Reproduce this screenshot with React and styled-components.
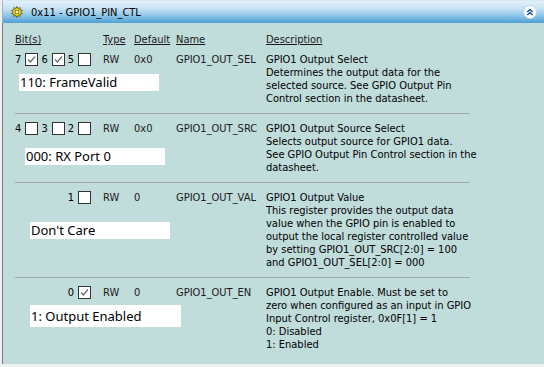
import styled, { createGlobalStyle } from "styled-components";

const GlobalStyle = createGlobalStyle`
  html, body {
    margin: 0;
    padding: 0;
    background: #f0f0f0;
  }
  body {
    font-family: "DejaVu Sans Condensed", "Liberation Sans", sans-serif;
    font-size: 11px;
    color: #000;
  }
`;

const fields = [
  {
    bits: [
      [7, true],
      [6, true],
      [5, false],
    ],
    type: "RW",
    def: "0x0",
    name: "GPIO1_OUT_SEL",
    desc: [
      "GPIO1 Output Select",
      "Determines the output data for the",
      "selected source. See GPIO Output Pin",
      "Control section in the datasheet.",
    ],
    value: "110: FrameValid",
    boxLeft: 4,
    boxTop: 8,
    boxWidth: 140,
    boxHeight: 17,
  },
  {
    bits: [
      [4, false],
      [3, false],
      [2, false],
    ],
    type: "RW",
    def: "0x0",
    name: "GPIO1_OUT_SRC",
    desc: [
      "GPIO1 Output Source Select",
      "Selects output source for GPIO1 data.",
      "See GPIO Output Pin Control section in the",
      "datasheet.",
    ],
    value: "000: RX Port 0",
    boxLeft: 10,
    boxTop: 13,
    boxWidth: 140,
    boxHeight: 17,
  },
  {
    bits: [[1, false]],
    type: "RW",
    def: "0",
    name: "GPIO1_OUT_VAL",
    desc: [
      "GPIO1 Output Value",
      "This register provides the output data",
      "value when the GPIO pin is enabled to",
      "output the local register controlled value",
      "by setting GPIO1_OUT_SRC[2:0] = 100",
      "and GPIO1_OUT_SEL[2:0] = 000",
    ],
    value: "Don't Care",
    boxLeft: 15,
    boxTop: 18,
    boxWidth: 140,
    boxHeight: 17,
  },
  {
    bits: [[0, true]],
    type: "RW",
    def: "0",
    name: "GPIO1_OUT_EN",
    desc: [
      "GPIO1 Output Enable. Must be set to",
      "zero when configured as an input in GPIO",
      "Input Control register, 0x0F[1] = 1",
      "0: Disabled",
      "1: Enabled",
    ],
    value: "1: Output Enabled",
    boxLeft: 15,
    boxTop: 6,
    boxWidth: 151,
    boxHeight: 22,
  },
];

function RegisterIcon() {
  return (
    <svg width="12" height="12" viewBox="0 0 12 12">
      <path
        d="M6 0.5 L7 2.5 L9.2 1.6 L9 3.8 L11.4 4.4 L9.8 6 L11.4 7.8 L9 8.2 L9.2 10.4 L7 9.5 L6 11.5 L5 9.5 L2.8 10.4 L3 8.2 L0.6 7.8 L2.2 6 L0.6 4.4 L3 3.8 L2.8 1.6 L5 2.5 Z"
        fill="#f2dc1e"
        stroke="#5a4a10"
        strokeWidth="0.8"
      />
      <rect x="4.2" y="4.2" width="3.6" height="3.6" fill="#fff8b0" stroke="#5a4a10" strokeWidth="0.6" />
    </svg>
  );
}

function CollapseIcon() {
  return (
    <svg width="14" height="14" viewBox="0 0 14 14">
      <circle cx="7" cy="7" r="6.5" fill="#ffffff" stroke="#b9d6ea" strokeWidth="1" />
      <path d="M4.3 7 L7 4.4 L9.7 7" fill="none" stroke="#1f4f8a" strokeWidth="1.4" />
      <path d="M4.3 10 L7 7.4 L9.7 10" fill="none" stroke="#1f4f8a" strokeWidth="1.4" />
    </svg>
  );
}

function CheckMark() {
  return (
    <svg width="11" height="11" viewBox="0 0 11 11">
      <path d="M2 5.5 L4.3 8 L9 2.5" fill="none" stroke="#6a6a6a" strokeWidth="1.2" />
    </svg>
  );
}

export default function App() {
  return (
    <>
      <GlobalStyle />
      <Panel>
        <TitleBar>
          <RegisterIcon />
          <Title>0x11 - GPIO1_PIN_CTL</Title>
          <CollapseButton>
            <CollapseIcon />
          </CollapseButton>
        </TitleBar>
        <Body>
          <ColumnHeads>
            <HeadLabel>Bit(s)</HeadLabel>
            <HeadLabel>Type</HeadLabel>
            <HeadLabel>Default</HeadLabel>
            <HeadLabel>Name</HeadLabel>
            <HeadLabel>Description</HeadLabel>
          </ColumnHeads>
          {fields.map((f, i) => (
            <FieldRow key={f.name} $first={i === 0}>
              <Bits>
                {f.bits.map(([n, on]) => (
                  <Bit key={n}>
                    <span>{n}</span>
                    <CheckBox>{on && <CheckMark />}</CheckBox>
                  </Bit>
                ))}
              </Bits>
              <Cell>{f.type}</Cell>
              <Cell>{f.def}</Cell>
              <Cell>{f.name}</Cell>
              <Description>
                {f.desc.map((line) => (
                  <div key={line}>{line}</div>
                ))}
              </Description>
              <ValueBox
                $left={f.boxLeft}
                $top={f.boxTop}
                $width={f.boxWidth}
                $height={f.boxHeight}
              >
                {f.value}
              </ValueBox>
            </FieldRow>
          ))}
        </Body>
      </Panel>
    </>
  );
}

const Panel = styled.div`
  width: 542px;
  height: 364px;
  margin-left: 2px;
  display: flex;
  flex-direction: column;
`;

const TitleBar = styled.div`
  flex-shrink: 0;
  height: 23px;
  box-sizing: border-box;
  display: flex;
  align-items: center;
  padding: 0 7px 0 8px;
  gap: 8px;
  background: linear-gradient(
    to bottom,
    #e3f1fa 0%,
    #c6e2f3 35%,
    #86c2e6 70%,
    #4f9fd4 100%
  );
  border-top: 1px solid #d8e6ee;
  border-left: 1px solid #9ab4c4;
`;

const Title = styled.span`
  flex: 1;
  font-size: 11px;
  color: #000;
`;

const CollapseButton = styled.span`
  display: flex;
  align-items: center;
`;

const Body = styled.div`
  flex: 1;
  min-height: 0;
  overflow: hidden;
  background: #c0dcdb;
  border-left: 1px solid #7c7c7c;
  padding: 10px 0 0 12px;
`;

const grid = `
  display: grid;
  grid-template-columns: 88px 31px 42px 90px 204px;
  line-height: 13px;
  white-space: nowrap;
`;

const ColumnHeads = styled.div`
  ${grid}
`;

const HeadLabel = styled.span`
  text-decoration: underline;
  color: #1a1a1a;
`;

const FieldRow = styled.div`
  ${grid}
  grid-template-rows: auto 1fr;
  width: 455px;
  padding: ${(p) => (p.$first ? "7px" : "8px")} 0 8px;
  border-top: ${(p) => (p.$first ? "none" : "1px solid #a2a9a9")};
`;

const Bits = styled.div`
  display: flex;
  justify-content: flex-end;
  padding-right: 12px;
  gap: 3px;
`;

const Bit = styled.span`
  display: flex;
  align-items: center;
  gap: 4px;
`;

const CheckBox = styled.span`
  width: 11px;
  height: 11px;
  background: #fff;
  border: 1px solid #333;
  display: flex;
  align-items: center;
  justify-content: center;
`;

const Cell = styled.span`
  color: #1a1a1a;
`;

const Description = styled.div`
  grid-column: 5;
  grid-row: 1 / 3;
`;

const ValueBox = styled.div`
  grid-column: 1 / 5;
  grid-row: 2;
  align-self: start;
  margin-left: ${(p) => p.$left}px;
  margin-top: ${(p) => p.$top}px;
  width: ${(p) => p.$width}px;
  height: ${(p) => p.$height}px;
  background: #fff;
  font-family: "Noto Sans", "Liberation Sans", sans-serif;
  font-size: 13px;
  line-height: ${(p) => p.$height}px;
  padding-left: 1px;
  box-sizing: border-box;
`;
